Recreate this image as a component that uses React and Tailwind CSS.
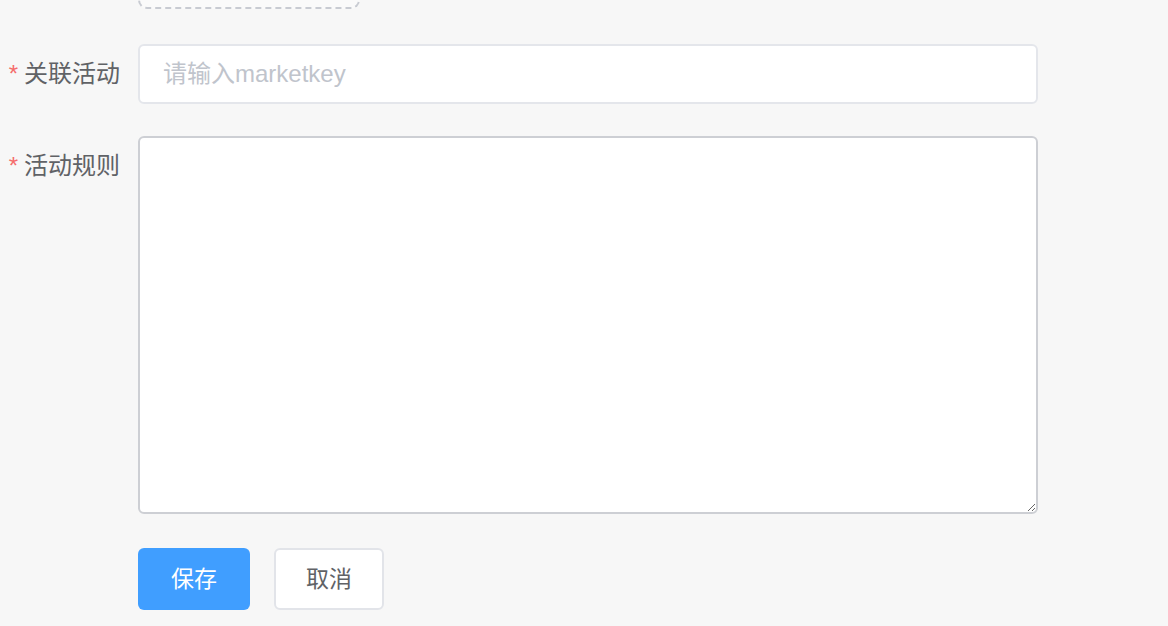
import React from 'react';

const Label = ({ children }) => (
  <label className="w-[138px] shrink-0 pr-[18px] text-right text-[24px] leading-[60px] text-[#606266]">
    <span className="mr-[6px] text-[#f56c6c]">*</span>
    {children}
  </label>
);

export default function App() {
  return (
    <div
      className="h-[626px] w-[1168px] overflow-hidden bg-[#f7f7f7]"
      style={{ fontFamily: '"Liberation Sans", "Noto Sans CJK SC", sans-serif' }}
    >
      {/* upload box, cut off at the top */}
      <div className="flex">
        <div className="w-[138px] shrink-0" />
        <div className="-mt-[141px] h-[150px] w-[222px] rounded-[9px] border-2 border-dashed border-[#c8cbd2] bg-[#fafafa]" />
      </div>

      <div className="mt-[35px] flex">
        <Label>关联活动</Label>
        <input
          placeholder="请输入marketkey"
          className="h-[60px] w-[900px] rounded-[6px] border-2 border-[#e4e6eb] bg-white px-[23px] text-[24px] text-[#606266] outline-none placeholder:text-[#c0c4cc]"
        />
      </div>

      <div className="mt-[32px] flex">
        <Label>活动规则</Label>
        <textarea className="block h-[378px] w-[900px] rounded-[6px] border-2 border-[#cdcfd4] bg-white px-[23px] py-[8px] text-[24px] text-[#606266] outline-none" />
      </div>

      <div className="mt-[34px] flex">
        <div className="w-[138px] shrink-0" />
        <div className="flex gap-[24px]">
          <button className="h-[62px] w-[112px] rounded-[6px] bg-[#409eff] text-[23px] text-white">
            保存
          </button>
          <button className="h-[62px] w-[110px] rounded-[6px] border-2 border-[#e2e4e9] bg-white text-[23px] text-[#606266]">
            取消
          </button>
        </div>
      </div>
    </div>
  );
}
